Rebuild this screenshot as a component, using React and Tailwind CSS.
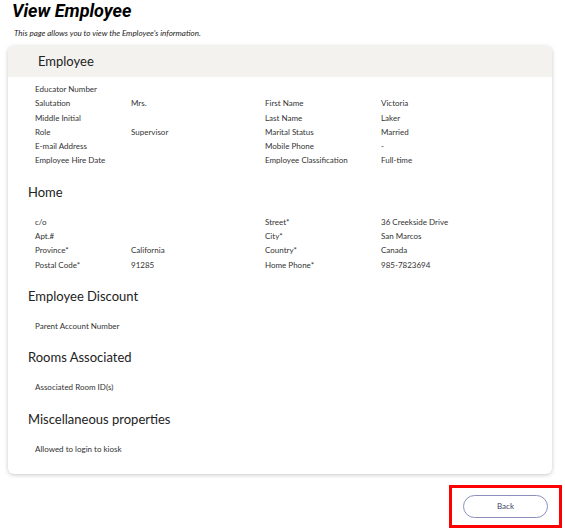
const employeeRows = [
  ["Educator Number", "", "", ""],
  ["Salutation", "Mrs.", "First Name", "Victoria"],
  ["Middle Initial", "", "Last Name", "Laker"],
  ["Role", "Supervisor", "Marital Status", "Married"],
  ["E-mail Address", "", "Mobile Phone", "-"],
  ["Employee Hire Date", "", "Employee Classification", "Full-time"],
];

const homeRows = [
  ["c/o", "", "Street*", "36 Creekside Drive"],
  ["Apt.#", "", "City*", "San Marcos"],
  ["Province*", "California", "Country*", "Canada"],
  ["Postal Code*", "91285", "Home Phone*", "985-7823694"],
];

function Rows({ rows }) {
  return (
    <div className="grid grid-cols-[96px_134px_116px_1fr] pl-[27px] text-[8px] text-[#333]">
      {rows.map((r, i) =>
        r.map((cell, j) => (
          <div key={i + "-" + j} className="h-[14.3px] leading-[14.3px] whitespace-nowrap">
            {cell}
          </div>
        ))
      )}
    </div>
  );
}

function Section({ title, children }) {
  return (
    <div className="mt-[15px]">
      <h2 className="pl-[20px] text-[13px] leading-[18px] text-[#222]">{title}</h2>
      <div className="mt-[14px]">{children}</div>
    </div>
  );
}

export default function App() {
  return (
    <div className="w-[565px] h-[530px] bg-white font-['Lato','Open_Sans',sans-serif] overflow-hidden">
      <div className="pl-[12px]">
        <h1 className="text-[18px] leading-[22px] font-bold italic text-black font-['Roboto','Liberation_Sans',sans-serif]">
          View Employee
        </h1>
        <p className="mt-[6px] pl-[2px] text-[8px] leading-[10px] italic text-[#222]">
          This page allows you to view the Employee's information.
        </p>
      </div>

      <div className="mt-[8px] ml-[8px] w-[544px] rounded-md bg-white shadow-[0_1px_4px_rgba(0,0,0,0.22)] pb-[18px]">
        <div className="h-[31px] rounded-t-md bg-[#f3f2ee] flex items-center pl-[30px]">
          <span className="text-[13px] text-[#222]">Employee</span>
        </div>
        <div className="pt-[5px]">
          <Rows rows={employeeRows} />
        </div>

        <Section title="Home">
          <Rows rows={homeRows} />
        </Section>
        <Section title="Employee Discount">
          <Rows rows={[["Parent Account Number", "", "", ""]]} />
        </Section>
        <Section title="Rooms Associated">
          <Rows rows={[["Associated Room ID(s)", "", "", ""]]} />
        </Section>
        <Section title="Miscellaneous properties">
          <Rows rows={[["Allowed to login to kiosk", "", "", ""]]} />
        </Section>
      </div>

      <div className="flex justify-end pr-[3px] mt-[11px]">
        <div className="w-[113px] h-[43px] border-[3px] border-[#ff0000] flex items-center justify-center">
          <button className="w-[85px] h-[23px] rounded-full border border-[#8a8fbd] bg-white text-[8px] text-[#3b3f66]">
            Back
          </button>
        </div>
      </div>
    </div>
  );
}
